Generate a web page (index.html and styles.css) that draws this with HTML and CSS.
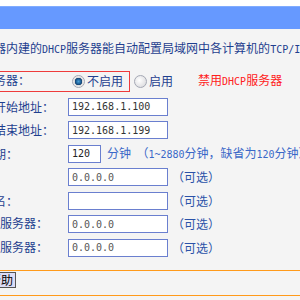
FILE: index.html
```html
<!DOCTYPE html>
<html lang="zh-CN">
<head>
    <meta charset="UTF-8">
    <title>DHCP服务</title>
    <link rel="stylesheet" href="styles.css">
</head>
<body>
    <div class="topline"></div>
    <header class="band"></header>

    <main class="content">
        <p class="intro">本路由器内建的<span class="en">DHCP</span>服务器能自动配置局域网中各计算机的<span class="en">TCP/IP</span>协议。</p>

        <div class="form">
            <div class="row first">
                <div class="mark">
                    <span class="label"><span class="en">DHCP</span>服务器：</span>
                    <span class="opt"><span class="radio on"></span>不启用</span>
                </div>
                <span class="opt second"><span class="radio"></span>启用</span>
                <span class="warn">禁用<span class="en">DHCP</span>服务器</span>
            </div>
            <div class="row">
                <span class="label">地址池开始地址：</span>
                <input class="field" type="text" value="192.168.1.100">
            </div>
            <div class="row">
                <span class="label">地址池结束地址：</span>
                <input class="field" type="text" value="192.168.1.199">
            </div>
            <div class="row">
                <span class="label">地址租期：</span>
                <input class="field short" type="text" value="120">
                <span class="hint unit">分钟&nbsp; （<span class="en">1~2880</span>分钟，缺省为<span class="en">120</span>分钟）</span>
            </div>
            <div class="row">
                <span class="label">网关：</span>
                <input class="field grey" type="text" value="0.0.0.0">
                <span class="hint">（可选）</span>
            </div>
            <div class="row">
                <span class="label">缺省域名：</span>
                <input class="field" type="text" value="">
                <span class="hint">（可选）</span>
            </div>
            <div class="row">
                <span class="label">首选<span class="en">DNS</span>服务器：</span>
                <input class="field grey" type="text" value="0.0.0.0">
                <span class="hint">（可选）</span>
            </div>
            <div class="row">
                <span class="label">备用<span class="en">DNS</span>服务器：</span>
                <input class="field grey" type="text" value="0.0.0.0">
                <span class="hint">（可选）</span>
            </div>
        </div>
    </main>

    <footer class="actions">
        <button class="btn" type="button">帮助</button>
    </footer>
</body>
</html>
```

FILE: styles.css
```css
/* General Styles */
* {
    margin: 0;
    padding: 0;
    box-sizing: border-box;
}

body {
    font-family: "Noto Sans CJK SC", "Noto Sans", sans-serif;
    font-size: 12px;
    line-height: 16px;
    color: #1f3f8f;
    background: #f4f4f4;
    width: 300px;
    height: 300px;
    overflow: hidden;
    white-space: nowrap;
}

.en {
    font-family: "DejaVu Sans Mono", monospace;
    font-size: 10px;
}

.topline {
    height: 6px;
    background: #fff;
}

.band {
    height: 23px;
    background: #6699ff;
    border-top: 1px solid #80acff;
}

/* Content */
.content {
    padding-top: 11px;
}

.intro {
    margin-left: -42px;
}

.form {
    margin-top: 11px;
    margin-left: -42px;
}

.row {
    display: flex;
    align-items: center;
    height: 23.5px;
}

.row.first {
    height: 24px;
    margin-bottom: 2px;
}

.label {
    width: 110px;
    flex-shrink: 0;
}

.mark {
    display: flex;
    align-items: center;
    height: 21px;
    margin-left: -2px;
    padding: 0 6px 0 1px;
    border: 1px solid #ee3b3b;
}

.opt {
    display: flex;
    align-items: center;
    gap: 2px;
    margin-left: 4px;
}

.opt.second {
    margin-left: 4px;
}

.radio {
    width: 13px;
    height: 13px;
    border-radius: 50%;
    border: 1px solid #a4a8b4;
    background: radial-gradient(circle at 40% 40%, #ffffff, #d4d4d8);
}

.radio.on {
    background: radial-gradient(circle at 50% 50%, #4aa0d8 0, #1d5f96 2.5px, #16406e 3.5px, #dcdcdc 4px, #f6f6f6 6px);
}

.warn {
    margin-left: 25px;
    color: #ff2020;
}

.field {
    width: 100px;
    height: 18px;
    padding: 0 3px;
    border: 1px solid #6a7fcf;
    background: #fff;
    font-family: "DejaVu Sans Mono", monospace;
    font-size: 10px;
    color: #333;
    outline: none;
}

.field.short {
    width: 33px;
    color: #222;
}

.field.grey {
    color: #555;
}

.hint {
    margin-left: 4px;
    color: #2a52a8;
}

.hint.unit {
    margin-left: 6px;
    color: #3a68c8;
}

/* Bottom bar */
.actions {
    position: absolute;
    top: 270px;
    left: 0;
    width: 300px;
    height: 26px;
    padding-top: 1px;
    border-top: 1px solid #ff9a1a;
    border-bottom: 1px solid #ff9a1a;
}

.btn {
    margin-left: -14px;
    height: 16px;
    padding: 0 2px;
    font-family: "Noto Sans CJK SC", sans-serif;
    font-size: 12px;
    line-height: 14px;
    color: #000;
    background: #dcdcf6;
    border: 1px solid #555;
    border-radius: 0;
}
```
